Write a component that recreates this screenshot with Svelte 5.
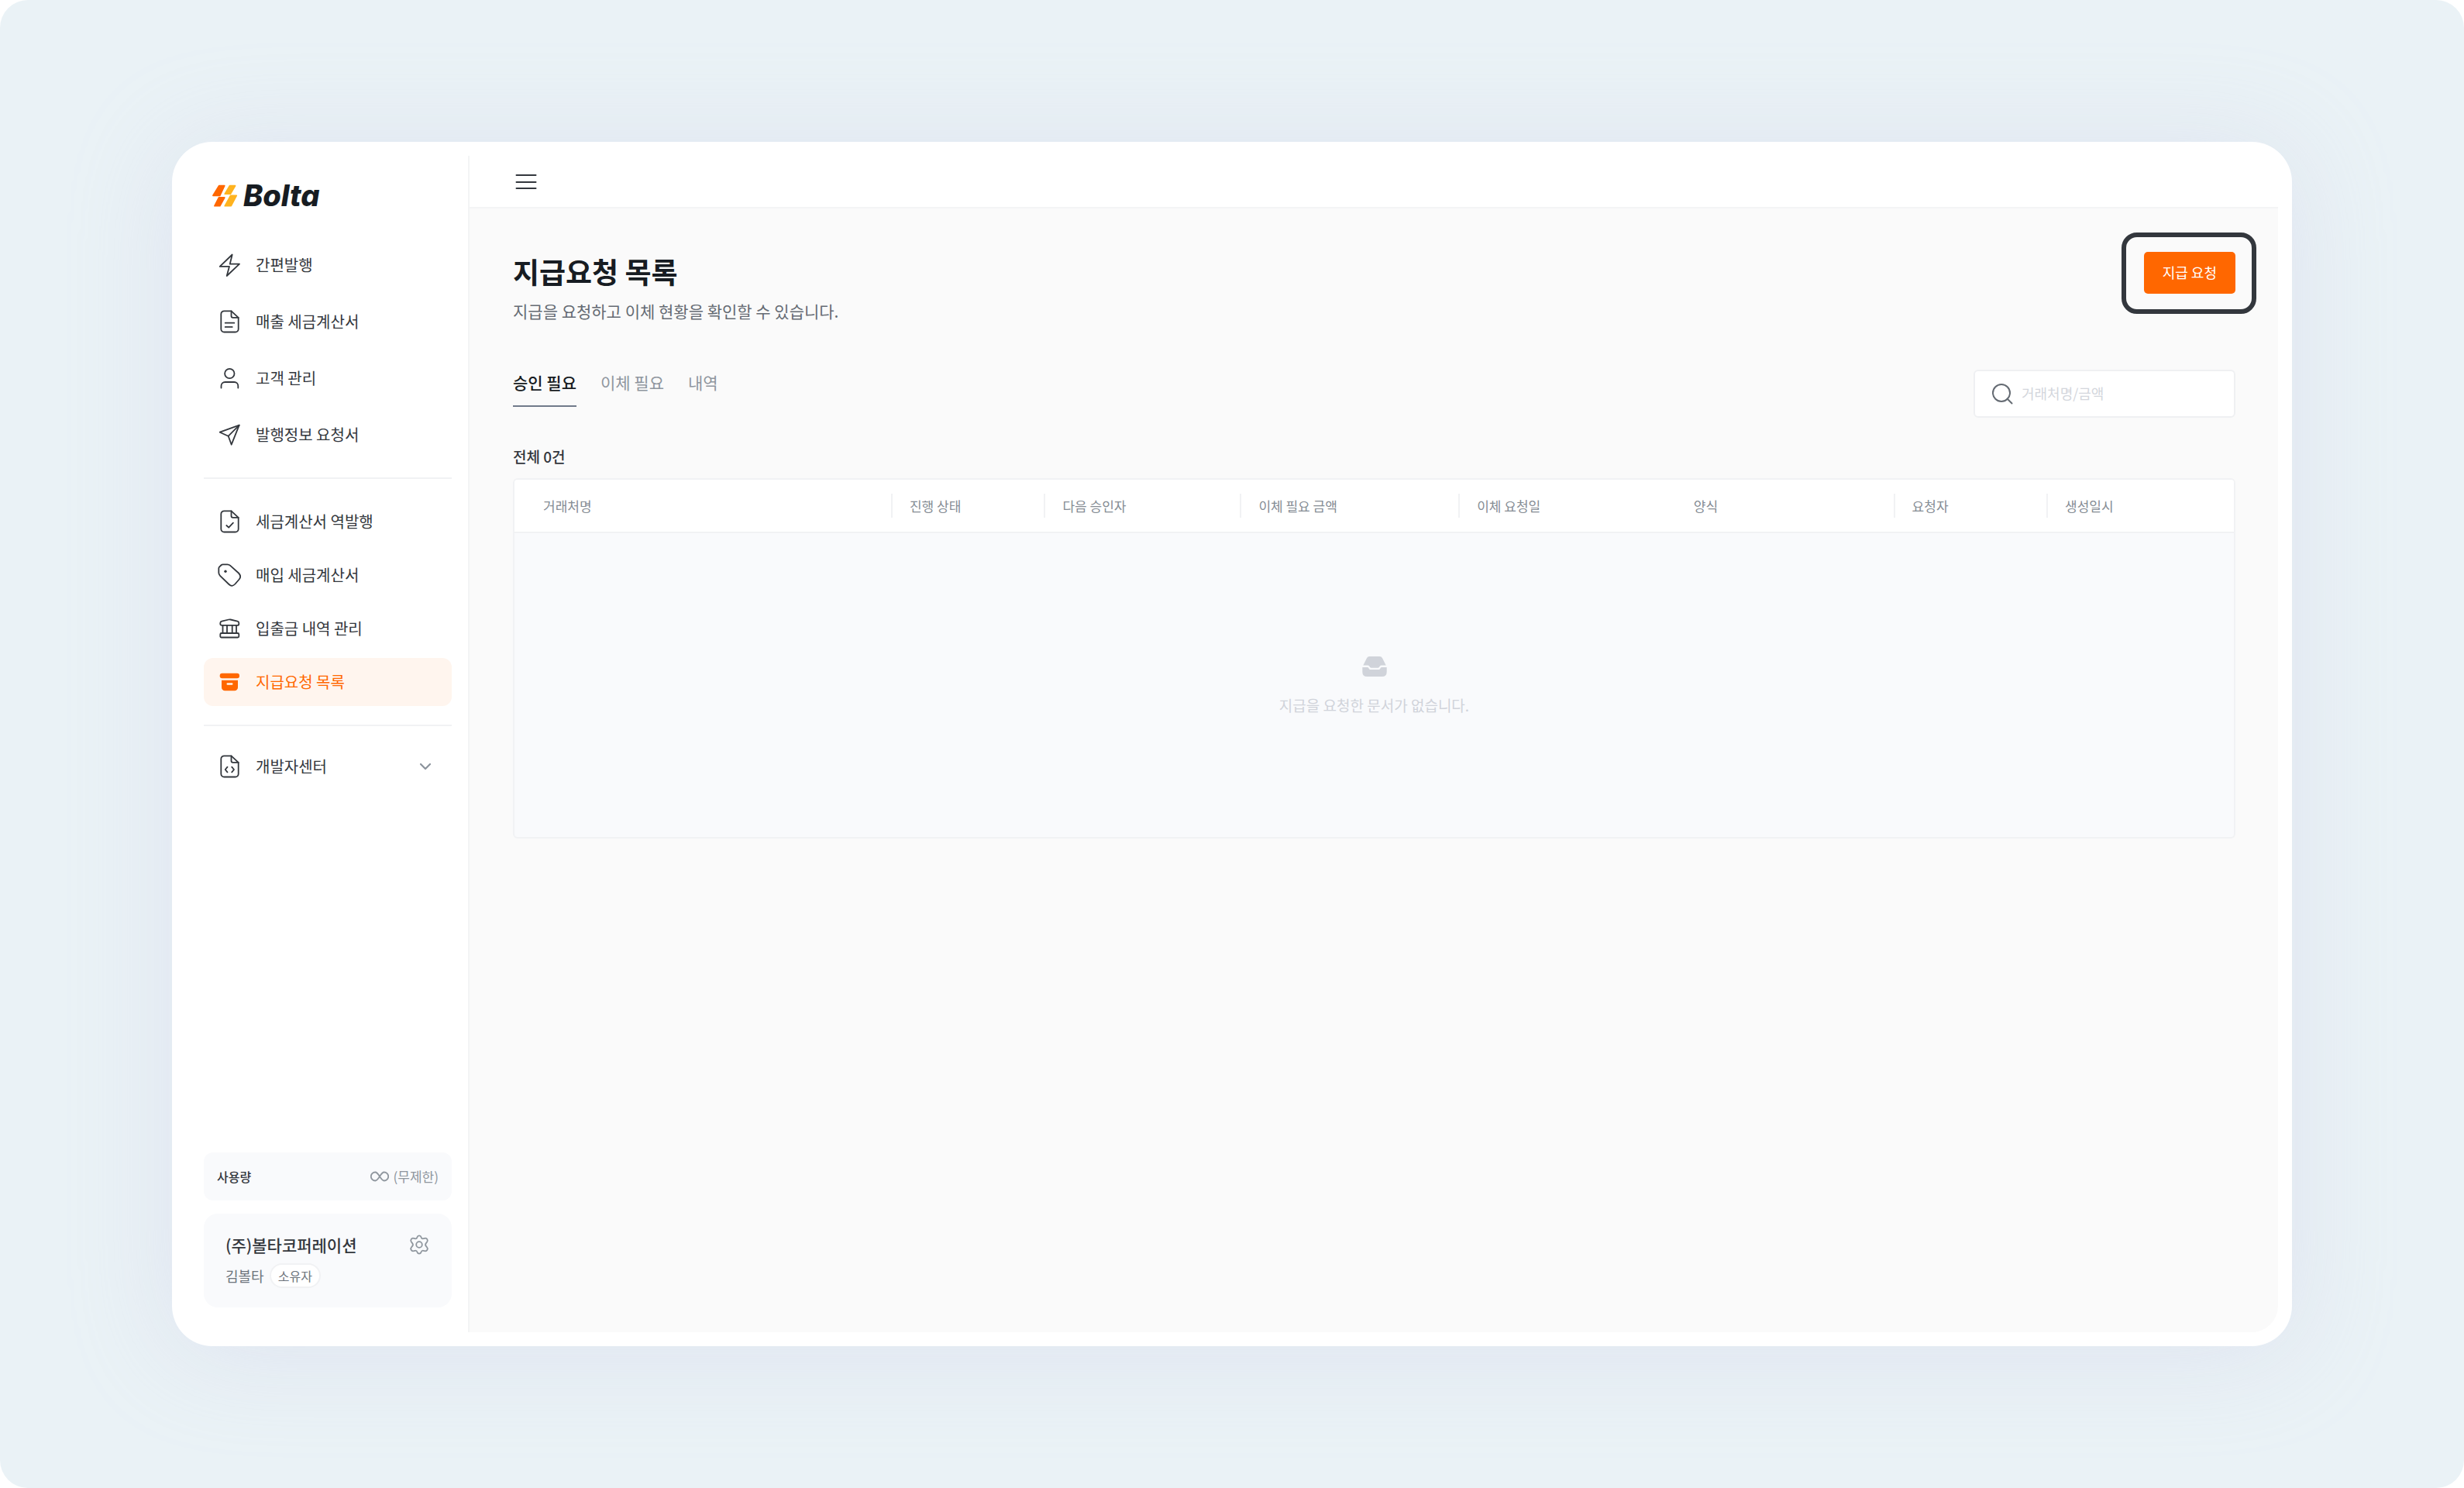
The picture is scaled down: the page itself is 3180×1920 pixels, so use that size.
<script lang="ts">
type Item = { label: string; icon: string; active?: boolean };

const issueMenu: Item[] = [
	{ label: "간편발행", icon: "bolt" },
	{ label: "매출 세금계산서", icon: "doc" },
	{ label: "고객 관리", icon: "user" },
	{ label: "발행정보 요청서", icon: "send" },
];

const purchaseMenu: Item[] = [
	{ label: "세금계산서 역발행", icon: "doc-check" },
	{ label: "매입 세금계산서", icon: "tag" },
	{ label: "입출금 내역 관리", icon: "bank" },
	{ label: "지급요청 목록", icon: "archive", active: true },
];

const tabs = ["승인 필요", "이체 필요", "내역"];

// width is a share of the table, in tenths of a percent
const columns = [
	{ label: "거래처명", width: 219 },
	{ label: "진행 상태", width: 89, divided: true },
	{ label: "다음 승인자", width: 114, divided: true },
	{ label: "이체 필요 금액", width: 127, divided: true },
	{ label: "이체 요청일", width: 126, divided: true },
	{ label: "양식", width: 127 },
	{ label: "요청자", width: 89, divided: true },
	{ label: "생성일시", width: 109, divided: true },
];

let currentTab = $state(tabs[0]);
let keyword = $state("");
</script>

{#snippet icon(name: string)}
	<svg class="icon" viewBox="0 0 30 30" aria-hidden="true">
		{#if name === "bolt"}
			<path d="M18.7 1.5 2.7 16.8H15L11.7 29 28 13.7H15.7Z" />
		{:else if name === "user"}
			<circle cx="15.3" cy="9" r="6.2" />
			<path d="M4.5 27.5V25a5 5 0 0 1 5-5h11.8a5 5 0 0 1 5 5v2.5" />
		{:else if name === "send"}
			<path d="M27.7 2.7 2.7 11.7l11 5 4 11Z" />
			<path d="m13.7 16.7 14-14" />
		{:else if name === "tag"}
			<path d="M6.5 1.3h6q2 0 3.5 1.3L27 12.5q4 4 .7 8l-5.2 6q-4 4.3-8 .5L3 15.8q-1.7-1.7-1.7-3.7V6.5q0-1 .7-1.8L4.7 2q.8-.7 1.8-.7Z" />
			<circle class="fill" cx="10" cy="10.3" r="1.7" />
		{:else if name === "bank"}
			<path d="M5.2 5.7 14 3.5q1.3-.3 2.6 0l8.8 2.2q1.9.5 1.9 2.200v1q0 2-2 2h-20q-2 0-2-2v-1q0-1.700 1.900-2.200Z" />
			<path d="M6.5 11v10M12 11v10M18.7 11v10M24 11v10" />
			<rect x="3.3" y="21" width="24" height="5.5" rx="1.5" />
		{:else if name === "archive"}
			<rect class="fill" x="2.7" y="3.7" width="25.3" height="6.6" rx="3" />
			<path class="fill" d="M5 12.7h21V22a4.3 4.3 0 0 1-4.3 4.3H9.3A4.3 4.3 0 0 1 5 22Zm7.7 3.6a1.2 1.2 0 0 0 0 2.4h5.6a1.2 1.2 0 0 0 0-2.4Z" />
		{:else}
			<path d="M17.5 1.3H8.3a4 4 0 0 0-4 4v19.2a4 4 0 0 0 4 4h14.4a4 4 0 0 0 4-4V9.8Z" />
			<path d="M17.5 1.3v6.5a2 2 0 0 0 2 2h7.2" />
			{#if name === "doc"}
				<path d="M9.7 16.7h11.6M9.7 21.9h9" />
			{:else if name === "doc-check"}
				<path d="m11.3 20 2.9 2.7 5.7-6" />
			{:else}
				<path d="M12.5 15.7 9.7 19l2.8 3.3M18.2 15.7 21 19l-2.8 3.3" />
			{/if}
		{/if}
	</svg>
{/snippet}

{#snippet menu(items: Item[])}
	<ul class="menu">
		{#each items as item (item.label)}
			<li>
				<a class="menu-item" class:active={item.active} href="#{item.icon}">
					{@render icon(item.icon)}
					<span>{item.label}</span>
				</a>
			</li>
		{/each}
	</ul>
{/snippet}

<div class="page">
	<div class="window">
		<aside class="sidebar">
			<a class="logo" href="#home">
				<svg class="logo-mark" viewBox="0 0 33 31" aria-hidden="true">
					<path class="orange" d="M8.7 2.7h7l-6 12.6H1Z" />
					<path class="orange" d="M8.5 18h7.2l-6 10.7H3Z" />
					<path class="yellow" d="M22.5 2.7h7l-6.2 10.5h-7Z" />
					<path class="yellow" d="M23.7 15.3h7.500l-7 13.400h-7.900Z" />
				</svg>
				<span>Bolta</span>
			</a>

			<nav>
				{@render menu(issueMenu)}
				<hr />
				<div class="dense">{@render menu(purchaseMenu)}</div>
				<hr />
				<button class="menu-item" type="button">
					{@render icon("doc-code")}
					<span>개발자센터</span>
					<svg class="chevron" viewBox="0 0 16 10" aria-hidden="true">
						<path d="m2 2 6 6 6-6" />
					</svg>
				</button>
			</nav>

			<div class="usage">
				<span class="usage-label">사용량</span>
				<span class="usage-value">
					<svg class="infinity" viewBox="0 0 24 14" aria-hidden="true">
						<path d="M12 7C9.7 3.5 8.5 1.5 6.3 1.5a5.5 5.5 0 0 0 0 11C8.5 12.5 9.7 10.5 12 7s3.5-5.5 5.7-5.5a5.5 5.5 0 0 1 0 11C15.500 12.500 14.300 10.500 12 7Z" />
					</svg>
					(무제한)
				</span>
			</div>

			<div class="account">
				<div class="account-row">
					<strong>(주)볼타코퍼레이션</strong>
					<button class="settings" type="button" aria-label="설정">
						<svg viewBox="0 0 26 26" aria-hidden="true">
							<path d="M10.4 3.4Q11 1.3 13 1.3t2.6 2.1q.7 2.4 3 1.8l1.5-.4q2.200-.5 3.300 1.400t-.5 3.600l-.9 1q-1.900 2.200 0 4.400l.9 1q1.600 1.700.5 3.600t-3.300 1.400l-1.500-.4q-2.300-.6-3 1.800Q15 24.700 13 24.700t-2.600-2.100q-.7-2.400-3-1.800l-1.500.4q-2.200.5-3.300-1.400t.5-3.600l.9-1q1.900-2.200 0-4.400l-.9-1Q1.500 8.100 2.600 6.200t3.300-1.400l1.500.4q2.300.6 3-1.800Z" />
							<circle cx="13" cy="13" r="3.8" />
						</svg>
					</button>
				</div>
				<div class="member">
					<span>김볼타</span>
					<span class="badge">소유자</span>
				</div>
			</div>
		</aside>

		<div class="content">
			<header class="topbar">
				<button class="toggle" type="button" aria-label="메뉴 접기">
					<svg viewBox="0 0 30 26" aria-hidden="true">
						<path d="M3.5 5h25M3.5 14h25M3.5 22h25" />
					</svg>
				</button>
			</header>

			<main>
				<div class="heading">
					<div>
						<h1>지급요청 목록</h1>
						<p>지급을 요청하고 이체 현황을 확인할 수 있습니다.</p>
					</div>
					<div class="spotlight">
						<button class="primary" type="button">지급 요청</button>
					</div>
				</div>

				<div class="toolbar">
					<div class="tabs" role="tablist">
						{#each tabs as tab (tab)}
							<button
								type="button"
								role="tab"
								aria-selected={tab === currentTab}
								class:selected={tab === currentTab}
								onclick={() => (currentTab = tab)}
							>
								{tab}
							</button>
						{/each}
					</div>
					<label class="search">
						<svg viewBox="0 0 28 28" aria-hidden="true">
							<circle cx="13" cy="13" r="11" />
							<path d="m20.5 20.5 6 6" />
						</svg>
						<input
							type="text"
							placeholder="거래처명/금액"
							aria-label="거래처명/금액"
							bind:value={keyword}
						/>
					</label>
				</div>

				<p class="count">전체 0건</p>

				<table>
					<colgroup>
						{#each columns as column (column.label)}
							<col style="width: {column.width / 10}%" />
						{/each}
					</colgroup>
					<thead>
						<tr>
							{#each columns as column (column.label)}
								<th scope="col"><span class:divided={column.divided}>{column.label}</span></th>
							{/each}
						</tr>
					</thead>
					<tbody>
						<tr>
							<td colspan={columns.length}>
								<div class="empty">
									<svg viewBox="0 0 32 32" aria-hidden="true">
										<path d="M9.5 3h13q2.5 0 3.7 2.4l4.5 9.1H25q-1.5 0-2.3 1.2l-.9 1.3q-.5.7-1.5.7h-8.6q-1 0-1.5-.7l-.9-1.3Q8.500 14.500 7 14.500H1.300l4.500-9.100Q7 3 9.500 3Z" />
										<path d="M.3 17h6.5q.8 0 1.2.6l.9 1.3q.8 1.2 2.3 1.2h9.6q1.5 0 2.3-1.2l.9-1.3q.4-.6 1.200-.6h6.500v6q0 6-6 6H6.300q-6 0-6-6Z" />
									</svg>
									<span>지급을 요청한 문서가 없습니다.</span>
								</div>
							</td>
						</tr>
					</tbody>
				</table>
			</main>
		</div>
	</div>
</div>

<style>
	:global(body) {
		background: #fff;
	}
	.page {
		box-sizing: border-box;
		display: flex;
		min-height: 100vh;
		padding: 183px 222px;
		border-radius: 36px;
		background: #eaf2f6;
		color: #33373d;
		font-family: "Noto Sans CJK KR", "Noto Sans", sans-serif;
		font-size: 20px;
		line-height: 30px;
	}
	.window {
		display: flex;
		flex: 1;
		padding: 18px;
		border-radius: 52px;
		background: #fff;
		box-shadow: 0 8px 130px rgba(194, 195, 226, 0.3);
	}
	svg {
		display: block;
		flex: none;
		fill: none;
		stroke: currentColor;
		stroke-width: 1.8;
		stroke-linecap: round;
		stroke-linejoin: round;
	}
	button {
		padding: 0;
		border: 0;
		background: none;
		color: inherit;
		font: inherit;
		cursor: pointer;
	}
	p,
	h1 {
		margin: 0;
	}

	.sidebar {
		box-sizing: border-box;
		display: flex;
		flex-direction: column;
		width: 366px;
		padding: 26px 21px 32px 23px;
		border-right: 2px solid #f3f4f5;
	}
	.logo {
		display: flex;
		align-items: center;
		gap: 7px;
		height: 50px;
		margin-bottom: 34px;
		padding-left: 11px;
		color: #171c22;
		font-family: Inter, sans-serif;
		font-size: 38px;
		font-style: italic;
		font-weight: 800;
		font-feature-settings: "cv11";
		line-height: 50px;
		text-decoration: none;
	}
	.logo-mark {
		width: 33px;
		height: 31px;
	}
	.orange {
		fill: #ff6700;
		stroke: #ff6700;
	}
	.yellow {
		fill: #ffb31f;
		stroke: #ffb31f;
	}
	.menu {
		display: flex;
		flex-direction: column;
		gap: 11px;
		margin: 0;
		padding: 0;
		list-style: none;
	}
	.dense {
		padding-top: 3px;
	}
	.dense .menu {
		gap: 7px;
	}
	.menu-item {
		box-sizing: border-box;
		display: flex;
		align-items: center;
		gap: 19px;
		width: 100%;
		height: 62px;
		padding: 0 26px 0 18px;
		border-radius: 12px;
		text-decoration: none;
		color: #33373d;
	}
	.menu-item.active {
		background: #fff5ee;
		color: #ff6700;
	}
	.icon {
		width: 30px;
		height: 30px;
	}
	.fill {
		fill: currentColor;
		fill-rule: evenodd;
		stroke: none;
	}
	.chevron {
		width: 16px;
		height: 10px;
		margin-left: auto;
		color: #8b939c;
		stroke-width: 2.2;
	}
	hr {
		height: 2px;
		margin: 24px 0 21px;
		border: 0;
		background: #f1f2f4;
	}
	.usage {
		display: flex;
		align-items: center;
		justify-content: space-between;
		height: 62px;
		margin-top: auto;
		padding: 0 17px;
		border-radius: 12px;
		background: #f9fafc;
	}
	.usage-label {
		font-size: 16px;
		font-weight: 500;
	}
	.usage-value {
		display: flex;
		align-items: center;
		gap: 6px;
		color: #8f969e;
		font-size: 17px;
	}
	.infinity {
		width: 24px;
		height: 14px;
	}
	.account {
		margin-top: 17px;
		padding: 23px 29px 25px 28px;
		border-radius: 18px;
		background: #f9fafc;
	}
	.account-row {
		display: flex;
		align-items: center;
		justify-content: space-between;
		height: 34px;
	}
	.account-row strong {
		font-size: 21px;
		font-weight: 500;
	}
	.settings {
		color: #8f969e;
	}
	.settings svg {
		width: 26px;
		height: 26px;
	}
	.member {
		display: flex;
		align-items: center;
		gap: 7px;
		margin-top: 7px;
		color: #6d747c;
		font-size: 18px;
	}
	.badge {
		padding: 0 9px;
		border: 2px solid #f1f2f4;
		border-radius: 16px;
		background: #fff;
		font-size: 16px;
		line-height: 28px;
	}

	.content {
		display: flex;
		flex: 1;
		flex-direction: column;
		min-width: 0;
		overflow: hidden;
		border-bottom-right-radius: 34px;
		background: #fafafa;
	}
	.topbar {
		display: flex;
		align-items: center;
		height: 66px;
		padding-left: 57px;
		border-bottom: 2px solid #f3f4f5;
		background: #fff;
	}
	.toggle svg {
		width: 30px;
		height: 26px;
		stroke-width: 2;
	}
	main {
		padding: 56px 55px 56px 56px;
	}
	.heading {
		display: flex;
		align-items: flex-start;
		justify-content: space-between;
	}
	h1 {
		color: #171c22;
		font-size: 37px;
		font-weight: 700;
		line-height: 50px;
	}
	.heading p {
		margin-top: 10px;
		color: #656b73;
		font-size: 21px;
		line-height: 32px;
	}
	.spotlight {
		position: relative;
	}
	.spotlight::after {
		position: absolute;
		inset: -25px -27px -26px -29px;
		border: 6px solid #33373d;
		border-radius: 20px;
		content: "";
		pointer-events: none;
	}
	.primary {
		display: block;
		height: 54px;
		padding: 0 24px 2px;
		border-radius: 5px;
		background: #ff6700;
		color: #fff;
		font-size: 18px;
	}
	.toolbar {
		display: flex;
		align-items: flex-start;
		justify-content: space-between;
		margin-top: 60px;
	}
	.tabs {
		display: flex;
		gap: 31px;
		padding-top: 2px;
	}
	.tabs button {
		padding-bottom: 16px;
		border-bottom: 2px solid transparent;
		color: #8f969e;
		font-size: 21px;
		line-height: 28px;
	}
	.tabs .selected {
		border-color: #707a8a;
		color: #171c22;
		font-weight: 500;
	}
	.search {
		box-sizing: border-box;
		display: flex;
		align-items: center;
		gap: 11px;
		width: 338px;
		height: 62px;
		padding: 0 20px 0 21px;
		border: 2px solid #eff0f2;
		border-radius: 6px;
		background: #fff;
		color: #656b73;
	}
	.search svg {
		width: 28px;
		height: 28px;
		stroke-width: 2;
	}
	.search input {
		flex: 1;
		min-width: 0;
		padding: 0 0 2px;
		border: 0;
		outline: 0;
		background: none;
		color: #33373d;
		font: inherit;
		font-size: 18px;
	}
	.search input::placeholder {
		color: #d3d6dc;
		opacity: 1;
	}
	.count {
		margin: 36px 0 14px;
		font-size: 19px;
		font-weight: 500;
		line-height: 28px;
	}
	table {
		width: 100%;
		overflow: hidden;
		border: 2px solid #f1f2f4;
		border-radius: 6px;
		border-spacing: 0;
		background: #f9fafc;
		table-layout: fixed;
	}
	th {
		padding: 18px 0;
		border-bottom: 2px solid #f1f2f4;
		background: #fff;
		color: #858c94;
		font-size: 17px;
		font-weight: 400;
		line-height: 31px;
		text-align: left;
	}
	th span {
		display: block;
		padding-left: 22px;
		border-left: 2px solid transparent;
	}
	th:first-child span {
		padding-left: 35px;
	}
	th .divided {
		border-color: #f1f2f4;
	}
	td {
		height: 392px;
		padding: 0;
	}
	.empty {
		display: flex;
		flex-direction: column;
		align-items: center;
		gap: 20px;
		color: #d0d3da;
		font-size: 19px;
		line-height: 28px;
	}
	.empty svg {
		width: 32px;
		height: 32px;
		fill: currentColor;
		stroke: none;
	}
</style>
